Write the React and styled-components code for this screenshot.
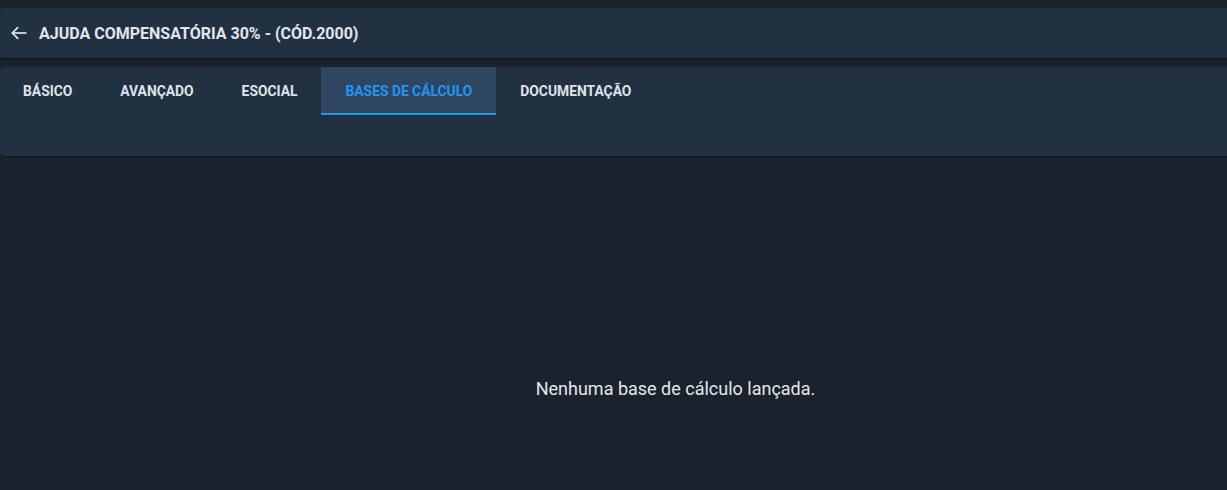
import styled, { createGlobalStyle } from "styled-components";

const GlobalStyle = createGlobalStyle`
  html, body {
    margin: 0;
    padding: 0;
    background: #1a222d;
    font-family: Roboto, "Noto Sans", sans-serif;
  }
`;

const Page = styled.div`
  min-height: 490px;
  background: #1a222d;
  padding-top: 8px;
  box-sizing: border-box;
  display: flex;
  flex-direction: column;
`;

const TopStrip = styled.div`
  height: 8px;
  margin-top: -8px;
  background: #1b232b;
`;

const HeaderCard = styled.header`
  height: 50px;
  background: #223142;
  border-radius: 4px 0 0 4px;
  margin-right: -8px;
  box-shadow: 0 1px 2px rgba(0, 0, 0, 0.35);
  display: flex;
  align-items: center;
  gap: 10px;
  padding-left: 9px;
`;

const BackButton = styled.button`
  background: none;
  border: 0;
  padding: 0;
  color: #e3e6ea;
  display: flex;
  align-items: center;
  cursor: pointer;
`;

const Title = styled.h1`
  margin: 0;
  font-size: 16px;
  font-weight: 700;
  color: #e3e6ea;
`;

const TabsCard = styled.section`
  margin-top: 9px;
  background: #223142;
  border-radius: 4px 0 0 4px;
  margin-right: -8px;
  box-shadow: 0 1px 2px rgba(0, 0, 0, 0.35);
`;

const TabRow = styled.nav`
  display: flex;
  height: 48px;
  margin-left: -1px;
  border-bottom: 1px solid #1d2a38;
`;

const Tab = styled.button`
  background: ${(p) => (p.$active ? "#2f4660" : "transparent")};
  border: 0;
  border-bottom: 2px solid ${(p) => (p.$active ? "#2196f3" : "transparent")};
  color: ${(p) => (p.$active ? "#2196f3" : "#dfe3e8")};
  font-family: Roboto, "Noto Sans", sans-serif;
  font-size: 13.85px;
  font-weight: 700;
  text-transform: uppercase;
  padding: 1px 24px 0 24px;
  height: 48px;
  box-sizing: border-box;
  cursor: pointer;
`;

const TabBody = styled.div`
  height: 40px;
`;

const Empty = styled.div`
  flex: 1;
  display: flex;
  justify-content: center;
  padding-left: 124px;
  padding-top: 222px;
  color: #e3e6ea;
  font-size: 18px;
`;

const tabs = [
  { label: "Básico" },
  { label: "Avançado" },
  { label: "eSocial" },
  { label: "Bases de cálculo", active: true },
  { label: "Documentação" },
];

export default function App() {
  return (
    <>
      <GlobalStyle />
      <Page>
        <TopStrip />
        <HeaderCard>
          <BackButton aria-label="Voltar">
            <svg width="20" height="20" viewBox="0 0 24 24" fill="none" stroke="currentColor" strokeWidth="2">
              <path d="M21 12H4.5" />
              <path d="M11 5l-7 7 7 7" />
            </svg>
          </BackButton>
          <Title>AJUDA COMPENSATÓRIA 30% - (CÓD.2000)</Title>
        </HeaderCard>
        <TabsCard>
          <TabRow>
            {tabs.map((t) => (
              <Tab key={t.label} $active={t.active}>
                {t.label}
              </Tab>
            ))}
          </TabRow>
          <TabBody />
        </TabsCard>
        <Empty>Nenhuma base de cálculo lançada.</Empty>
      </Page>
    </>
  );
}
